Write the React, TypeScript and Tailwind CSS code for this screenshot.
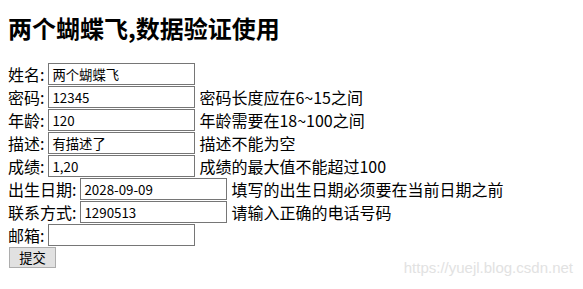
const fields = [
  { label: "姓名:", value: "两个蝴蝶飞", wide: false, tip: "" },
  { label: "密码:", value: "12345", wide: false, tip: "密码长度应在6~15之间" },
  { label: "年龄:", value: "120", wide: false, tip: "年龄需要在18~100之间" },
  { label: "描述:", value: "有描述了", wide: false, tip: "描述不能为空" },
  { label: "成绩:", value: "1,20", wide: false, tip: "成绩的最大值不能超过100" },
  { label: "出生日期:", value: "2028-09-09", wide: true, tip: "填写的出生日期必须要在当前日期之前" },
  { label: "联系方式:", value: "1290513", wide: true, tip: "请输入正确的电话号码" },
  { label: "邮箱:", value: "", wide: false, tip: "" },
];

const App = () => {
  return (
    <div className="relative w-[583px] h-[289px] bg-white text-black font-['Noto_Sans_CJK_SC',sans-serif] px-[8px] overflow-hidden">
      <h2 className="pt-[14px] h-[42px] leading-[28px] text-[24px] font-bold mb-[21px]">
        两个蝴蝶飞,数据验证使用
      </h2>

      <form className="flex flex-col gap-[1px]">
        {fields.map((f) => (
          <div key={f.label} className="flex items-center h-[22px]">
            <span className="text-[16px] leading-[22px] whitespace-nowrap">{f.label}</span>
            <input
              readOnly
              value={f.value}
              className="ml-[4px] w-[147px] h-[22px] border border-[#767676] px-[3px] text-[13.33px] leading-[18px] outline-none"
            />
            {f.tip && (
              <span className="ml-[4px] text-[16px] leading-[22px] whitespace-nowrap">{f.tip}</span>
            )}
          </div>
        ))}
        <div className="flex">
          <button
            type="button"
            className="ml-[1px] w-[47px] h-[21px] bg-[#e1e1e1] border border-[#adadad] text-[13.33px] leading-[18px]"
          >
            提交
          </button>
        </div>
      </form>

      <div className="absolute right-[10px] bottom-[10px] text-[15px] text-[#e2e2e2] font-['Liberation_Sans',sans-serif]">
        https://yuejl.blog.csdn.net
      </div>
    </div>
  );
};

export default App;
